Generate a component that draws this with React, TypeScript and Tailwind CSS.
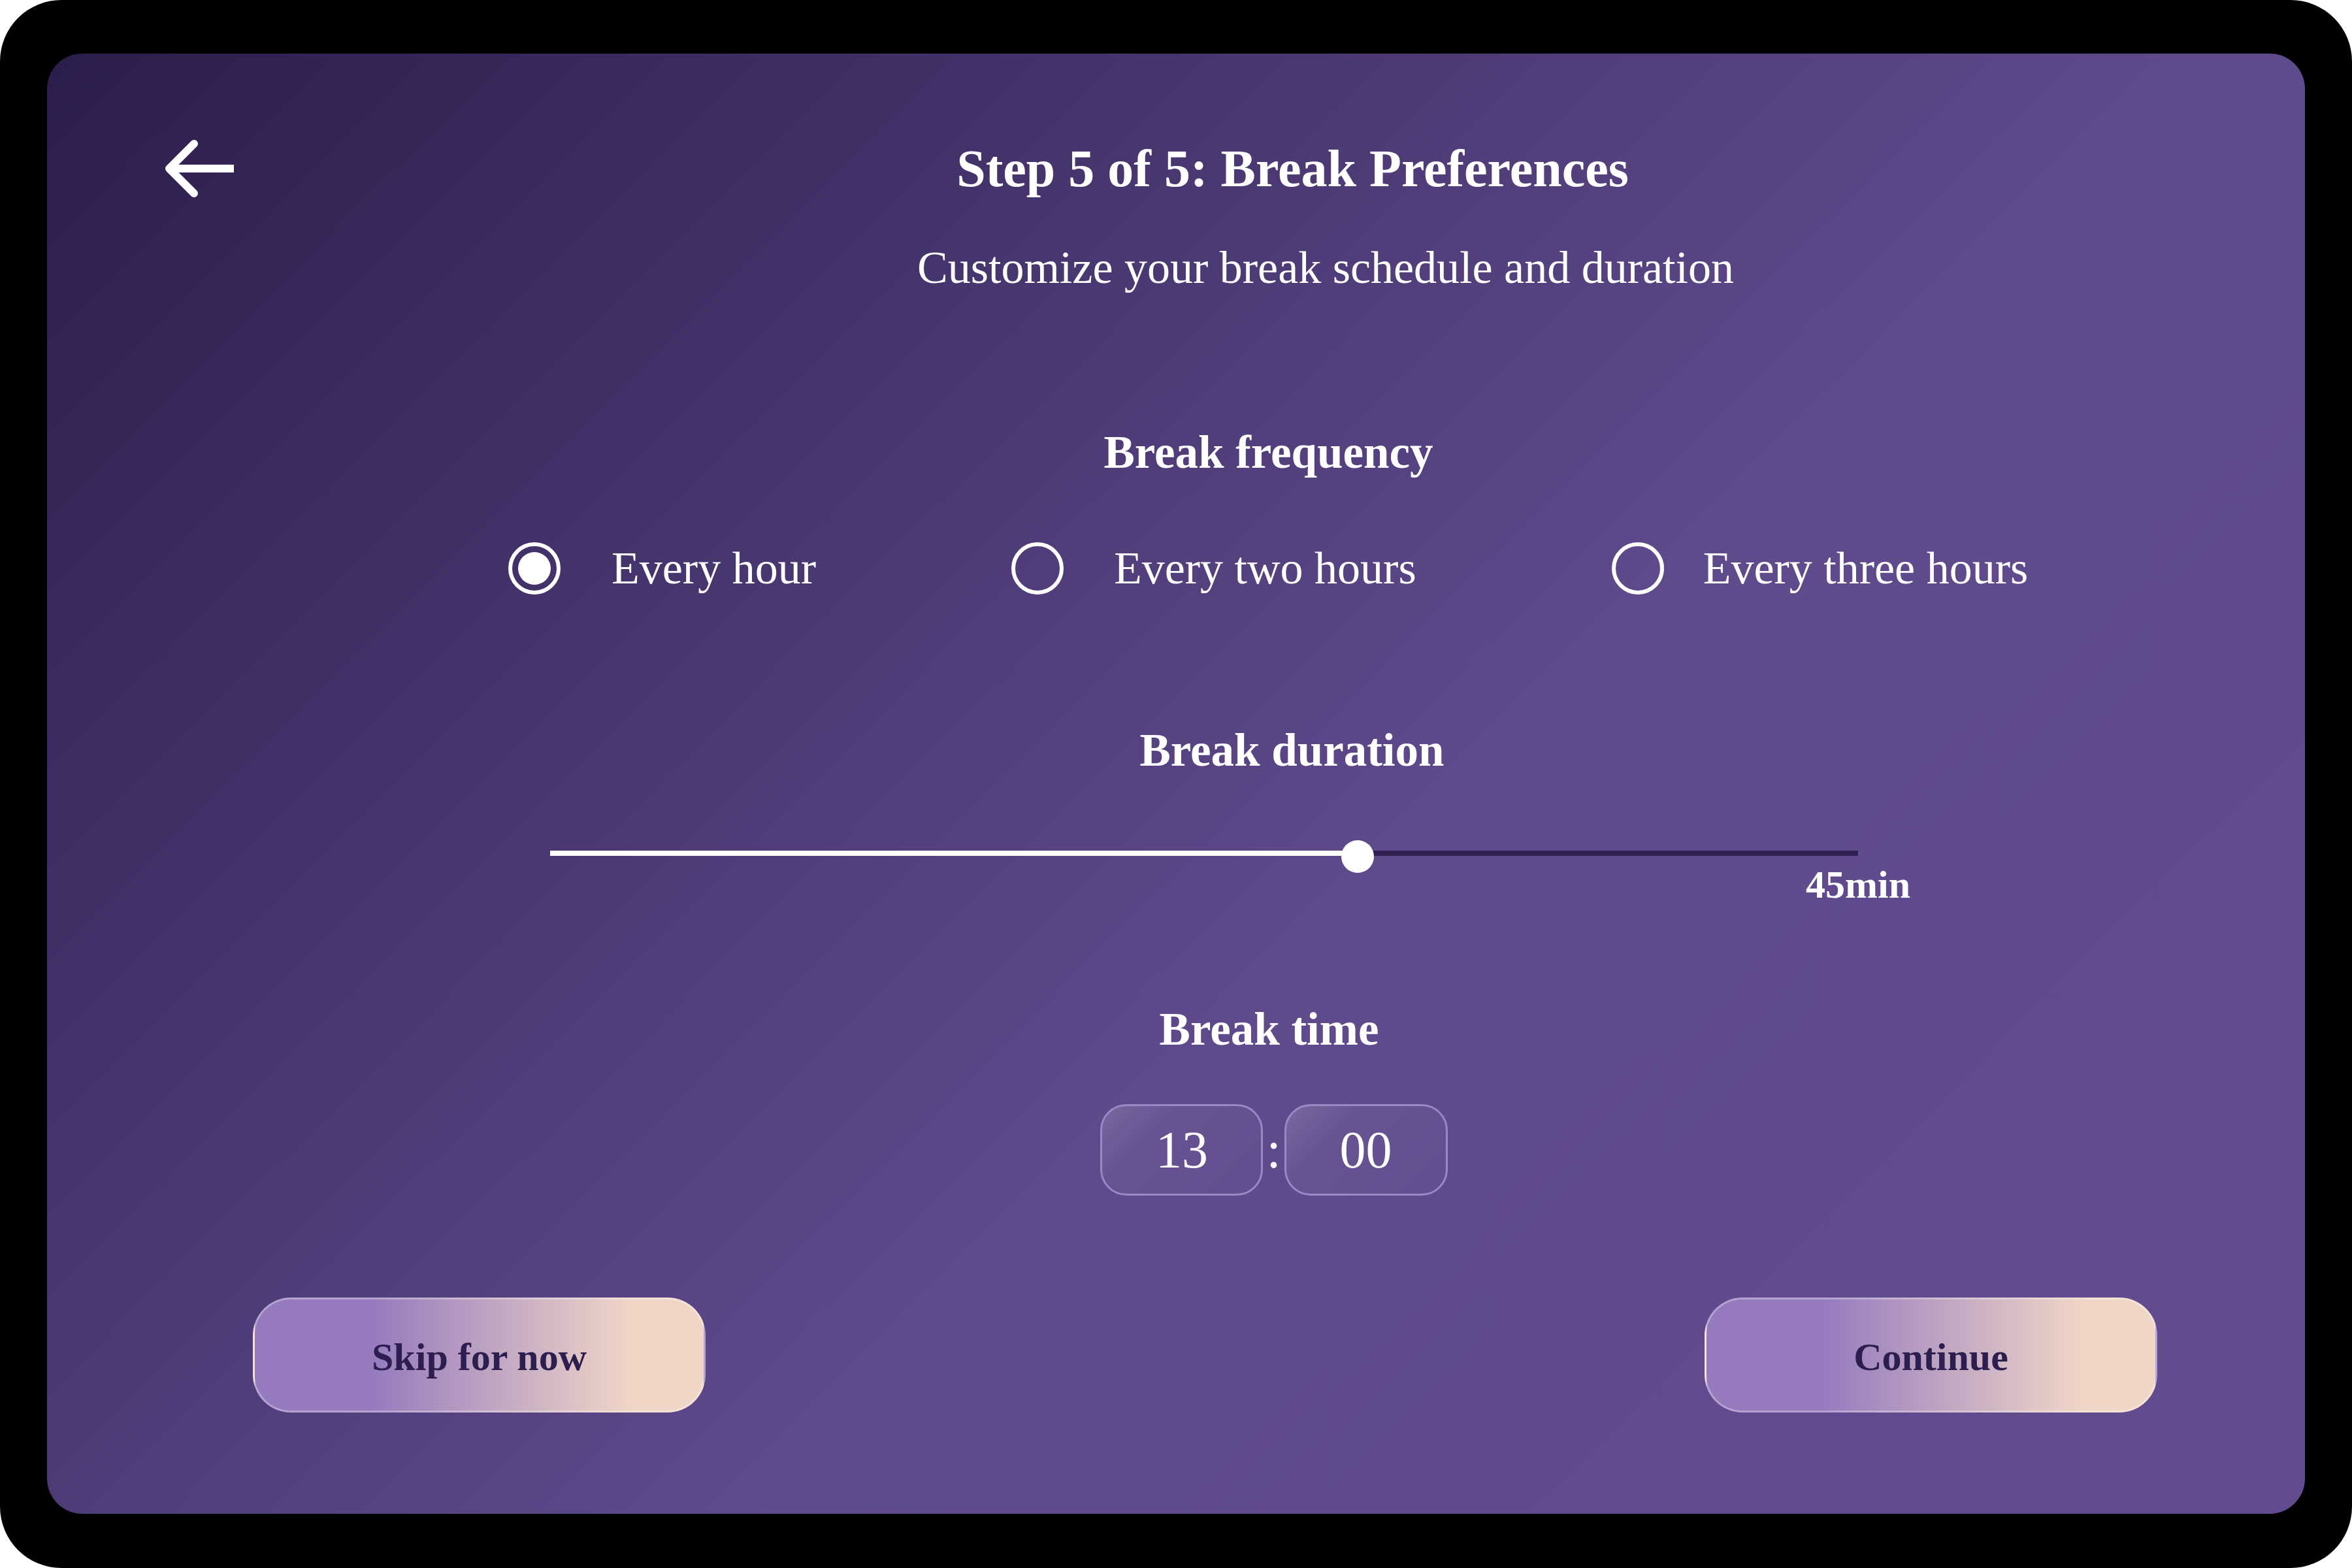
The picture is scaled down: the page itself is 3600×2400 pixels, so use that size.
import React from 'react';

const options = [
  { label: 'Every hour', checked: true, gap: 'gap-[78px]' },
  { label: 'Every two hours', checked: false, gap: 'gap-[77px]' },
  { label: 'Every three hours', checked: false, gap: 'gap-[60px]' },
];

const BackArrow: React.FC = () => (
  <svg width="120" height="100" viewBox="0 0 120 100" fill="none" stroke="white" strokeWidth="12">
    <path d="M52 12 L14 50 L52 88" strokeLinecap="round" strokeLinejoin="round" />
    <path d="M14 50 H113" strokeLinecap="butt" />
  </svg>
);

const Radio: React.FC<{ checked: boolean }> = ({ checked }) => (
  <div className="w-[80px] h-[80px] rounded-full border-[6px] border-white flex items-center justify-center shrink-0">
    {checked && <div className="w-[50px] h-[50px] rounded-full bg-white" />}
  </div>
);

const TimeBox: React.FC<{ value: string; width: string }> = ({ value, width }) => (
  <div
    className={`${width} h-[140px] rounded-[40px] border-[3px] border-[#9b87c6] bg-[linear-gradient(135deg,rgba(255,255,255,0.17)_0%,rgba(255,255,255,0.05)_30%,rgba(255,255,255,0.02)_100%)] flex items-center justify-center text-[80px] leading-none`}
  >
    {value}
  </div>
);

const App: React.FC = () => {
  return (
    <div className="w-[3600px] h-[2400px] bg-white">
      <div className="w-full h-full bg-black rounded-[94px] pt-[82px] pb-[83px] px-[72px]">
        <div className="h-full rounded-[54px] bg-[linear-gradient(135deg,#2b1d4b_0%,#5f4a8c_58%,#624c8f_100%)] pt-[126px] flex flex-col text-white font-['Liberation_Serif','Times_New_Roman',serif]">
          {/* Header */}
          <div className="flex items-start">
            <button className="ml-[173px] w-[120px] h-[100px] shrink-0">
              <BackArrow />
            </button>
            <div className="flex-1 flex justify-center pl-[64px] pt-[10px]">
              <h1 className="text-[80px] leading-none font-bold whitespace-nowrap">Step 5 of 5: Break Preferences</h1>
            </div>
          </div>

          <div className="flex justify-center pl-[458px] mt-[67px]">
            <p className="text-[70px] leading-none whitespace-nowrap">Customize your break schedule and duration</p>
          </div>

          {/* Break frequency */}
          <div className="flex justify-center pl-[283px] mt-[212px]">
            <h2 className="text-[71px] leading-none font-bold whitespace-nowrap">Break frequency</h2>
          </div>
          <div className="flex items-center gap-[299px] ml-[706px] mt-[102px] h-[80px]">
            {options.map((o) => (
              <div key={o.label} className={`flex items-center ${o.gap}`}>
                <Radio checked={o.checked} />
                <span className="text-[70px] leading-none whitespace-nowrap">{o.label}</span>
              </div>
            ))}
          </div>

          {/* Break duration */}
          <div className="flex justify-center pl-[355px] mt-[203px]">
            <h2 className="text-[71px] leading-none font-bold whitespace-nowrap">Break duration</h2>
          </div>
          <div className="relative ml-[770px] mt-[102px] w-[2002px] h-[50px] shrink-0">
            <div className="absolute left-0 right-0 top-[16px] h-[8px] bg-[#2e2152]" />
            <div className="absolute left-0 top-[16px] h-[8px] w-[61.7%] bg-white" />
            <div className="absolute left-[1211px] top-0 w-[50px] h-[50px] rounded-full bg-white" />
            <span className="absolute left-[2002px] top-[38px] -translate-x-1/2 text-[60px] leading-none font-bold whitespace-nowrap">
              45min
            </span>
          </div>

          {/* Break time */}
          <div className="flex justify-center pl-[285px] mt-[204px]">
            <h2 className="text-[71px] leading-none font-bold whitespace-nowrap">Break time</h2>
          </div>
          <div className="flex justify-center items-center pl-[300px] mt-[79px]">
            <TimeBox value="13" width="w-[249px]" />
            <span className="mx-[5px] text-[80px] leading-none">:</span>
            <TimeBox value="00" width="w-[250px]" />
          </div>

          {/* Actions */}
          <div className="flex justify-between pl-[315px] pr-[226px] mt-[156px]">
            <button className="w-[693px] h-[176px] rounded-[58px] border-[3px] border-white/30 bg-[linear-gradient(90deg,#957bbe_26%,#f0d6c6_84%)] text-[#2c1f50] text-[60px] font-bold leading-none flex items-center justify-center pt-[6px]">
              Skip for now
            </button>
            <button className="w-[693px] h-[176px] rounded-[58px] border-[3px] border-white/30 bg-[linear-gradient(90deg,#957bbe_26%,#f0d6c6_84%)] text-[#2c1f50] text-[60px] font-bold leading-none flex items-center justify-center pt-[6px]">
              Continue
            </button>
          </div>
        </div>
      </div>
    </div>
  );
};

export default App;
